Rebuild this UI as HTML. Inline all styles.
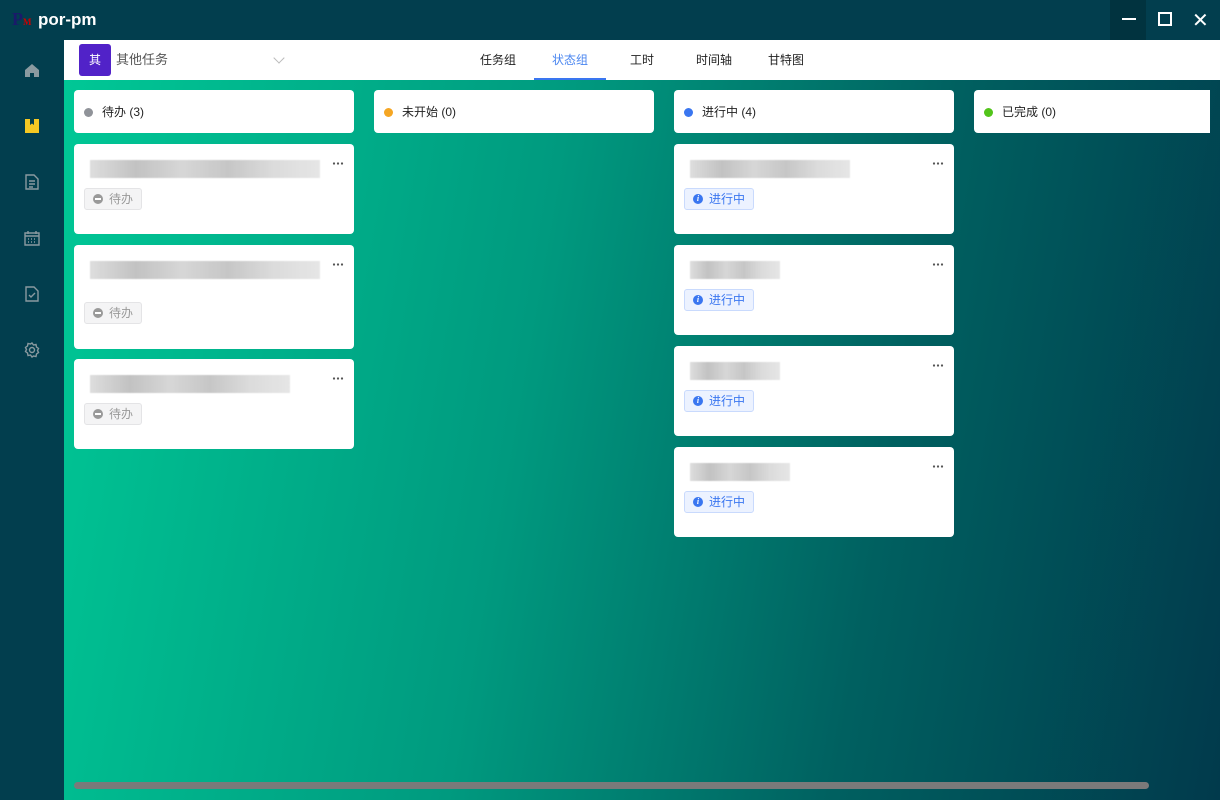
<!DOCTYPE html>
<html><head><meta charset="utf-8"><style>
*{margin:0;padding:0;box-sizing:border-box}
body{width:1220px;height:800px;overflow:hidden;background:#023e4e;font-family:"Liberation Sans","Noto Sans CJK SC",sans-serif;position:relative}
.title{position:absolute;left:0;top:0;width:1220px;height:40px;background:#023e4e;color:#fff}
.main{position:absolute;left:64px;top:40px;width:1156px;height:760px;background:linear-gradient(100deg,#00c896 0%,#009a7f 40%,#006060 70%,#013a4c 100%)}
.hdr{position:absolute;left:0;top:0;width:1156px;height:40px;background:#fff}
.col{position:absolute;top:50px;width:280px;height:43px;background:#fff;border-radius:4px;font-size:12px;color:#222;line-height:44px;padding-left:28px}
.col i{position:absolute;left:10px;top:18px;width:9px;height:9px;border-radius:50%}
.card{position:absolute;width:280px;height:90px;background:#fff;border-radius:4px}
.blur{position:absolute;left:16px;top:16px;height:18px;background:linear-gradient(90deg,#d8d8d8,#b8b8b8 20%,#d0d0d0 40%,#bdbdbd 60%,#d6d6d6 80%,#e2e2e2);opacity:.85;filter:blur(.5px)}
.dots{position:absolute;right:10px;top:18px;width:12px;height:3px;background:radial-gradient(circle,#555 1px,transparent 1.3px) 0 0/4px 3px repeat-x}
.tag{position:absolute;left:10px;height:22px;border-radius:3px;font-size:12px;line-height:20px;padding:0 8px 0 24px}
.tag.g{background:#f4f4f5;border:1px solid #e4e4e6;color:#999}
.tag.b{background:#ecf2ff;border:1px solid #c9dafd;color:#3a76f0}
.tag b{position:absolute;left:8px;top:5px;width:10px;height:10px;border-radius:50%;color:#fff;font:italic bold 8px/10px "Liberation Serif",serif;text-align:center}
.tag.g b:after{content:"";position:absolute;left:2px;top:4px;width:6px;height:2px;background:#fff}
.tab{position:absolute;top:0;line-height:40px;font-size:12px;color:#222}
.nav{position:absolute;left:24px;width:16px;height:16px}
</style></head><body>
<div class="title">
<div style="position:absolute;left:12px;top:9px;font:bold 18px 'Liberation Serif',serif;color:#1a1a6a">P<span style="color:#c00;font-size:9px">M</span></div>
<div style="position:absolute;left:38px;top:10px;font-weight:bold;font-size:17px">por-pm</div>
<div style="position:absolute;left:1110px;top:0;width:36px;height:40px;background:#01333f"></div>
<div style="position:absolute;left:1122px;top:18px;width:14px;height:2px;background:#fff"></div>
<div style="position:absolute;left:1158px;top:12px;width:14px;height:14px;border:2px solid #fff"></div>
<div style="position:absolute;left:1192px;top:8px;color:#fff;font-size:20px">✕</div>
</div>
<svg class="nav" style="top:62px" viewBox="0 0 16 16"><path d="M1 8L8 2l7 6v7H10v-4H6v4H1z" fill="#8a9aa0"/></svg>
<svg class="nav" style="top:118px" viewBox="0 0 16 16"><path d="M1 1h14v14H1z" fill="#f5c823"/><path d="M6 1v6l2-1.5L10 7V1" fill="#023e4e"/></svg>
<svg class="nav" style="top:174px" viewBox="0 0 16 16" fill="none" stroke="#8a9aa0" stroke-width="1.4"><path d="M2 1h8l4 4v10H2zM5 7h6M5 10h6M5 13h4"/></svg>
<svg class="nav" style="top:230px" viewBox="0 0 16 16" fill="none" stroke="#8a9aa0" stroke-width="1.4"><path d="M1 3h14v12H1zM1 6h14M4 1v3M12 1v3"/><path d="M4 9h1M7 9h1M10 9h1M4 12h1M7 12h1M10 12h1"/></svg>
<svg class="nav" style="top:286px" viewBox="0 0 16 16" fill="none" stroke="#8a9aa0" stroke-width="1.4"><path d="M2 1h8l4 4v10H2zM5 9l2 2 4-4"/></svg>
<svg class="nav" style="top:342px" viewBox="0 0 16 16" fill="none" stroke="#8a9aa0" stroke-width="1.4"><circle cx="8" cy="8" r="2.5"/><path d="M8 1l1.5 2 2.5-.5.5 2.5 2 1.5-1 2 1 2-2 1.5-.5 2.5-2.5-.5L8 15l-1.5-2-2.5.5-.5-2.5-2-1.5 1-2-1-2 2-1.5.5-2.5 2.5.5z"/></svg>
<div class="main">
<div class="hdr">
<div style="position:absolute;left:15px;top:4px;width:32px;height:32px;background:#5122c8;border-radius:3px;color:#fff;font-size:12px;text-align:center;line-height:32px">其</div>
<div style="position:absolute;left:52px;top:11px;font-size:13px;line-height:18px;color:#555">其他任务</div>
<div style="position:absolute;left:211px;top:14px;width:8px;height:8px;border-right:1px solid #bbb;border-bottom:1px solid #bbb;transform:rotate(45deg)"></div>
<div class="tab" style="left:416px">任务组</div>
<div class="tab" style="left:470px;width:72px;text-align:center;color:#4a86f0;border-bottom:2px solid #3a76f0;height:40px">状态组</div>
<div class="tab" style="left:566px">工时</div>
<div class="tab" style="left:632px">时间轴</div>
<div class="tab" style="left:704px">甘特图</div>
</div>
<div class="col" style="left:10px"><i style="background:#909399"></i>待办 (3)</div>
<div class="col" style="left:310px"><i style="background:#f5a623"></i>未开始 (0)</div>
<div class="col" style="left:610px"><i style="background:#3a76f0"></i>进行中 (4)</div>
<div class="col" style="left:910px;width:236px;border-radius:4px 0 0 4px"><i style="background:#52c41a"></i>已完成 (0)</div>

<div class="card" style="left:10px;top:104px"><div class="blur" style="width:230px"></div><div class="dots"></div><div class="tag g" style="top:44px"><b style="background:#999"></b>待办</div></div>
<div class="card" style="left:10px;top:205px;height:104px"><div class="blur" style="width:230px"></div><div class="dots"></div><div class="tag g" style="top:57px"><b style="background:#999"></b>待办</div></div>
<div class="card" style="left:10px;top:319px"><div class="blur" style="width:200px"></div><div class="dots"></div><div class="tag g" style="top:44px"><b style="background:#999"></b>待办</div></div>

<div class="card" style="left:610px;top:104px"><div class="blur" style="width:160px"></div><div class="dots"></div><div class="tag b" style="top:44px"><b style="background:#3a76f0">i</b>进行中</div></div>
<div class="card" style="left:610px;top:205px"><div class="blur" style="width:90px"></div><div class="dots"></div><div class="tag b" style="top:44px"><b style="background:#3a76f0">i</b>进行中</div></div>
<div class="card" style="left:610px;top:306px"><div class="blur" style="width:90px"></div><div class="dots"></div><div class="tag b" style="top:44px"><b style="background:#3a76f0">i</b>进行中</div></div>
<div class="card" style="left:610px;top:407px"><div class="blur" style="width:100px"></div><div class="dots"></div><div class="tag b" style="top:44px"><b style="background:#3a76f0">i</b>进行中</div></div>

<div style="position:absolute;left:10px;top:742px;width:1075px;height:7px;border-radius:4px;background:#7a7a7a"></div>
</div>
</body></html>
